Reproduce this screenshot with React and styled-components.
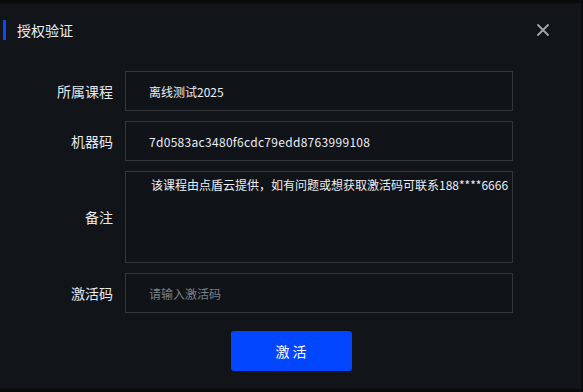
import React from "react";
import styled, { createGlobalStyle } from "styled-components";

const Global = createGlobalStyle`
  html, body { margin: 0; padding: 0; background: #0a0b0d; }
  body { font-family: "Noto Sans CJK SC", "Noto Sans", sans-serif; }
  * { box-sizing: border-box; }
`;

const Dialog = styled.div`
  margin-top: 3px;
  width: 581px;
  height: 386px;
  background: #111418;
  display: flex;
  flex-direction: column;
`;

const Header = styled.div`
  height: 54px;
  display: flex;
  align-items: center;
  padding: 0 26px 0 3px;
`;

const Accent = styled.span`
  width: 3px;
  height: 20px;
  background: #0b47ff;
  margin-right: 11px;
`;

const Title = styled.h2`
  margin: 0;
  flex: 1;
  font-size: 14px;
  font-weight: 400;
  color: #eef1f5;
  line-height: 20px;
`;

const Close = styled.button`
  width: 24px;
  height: 24px;
  padding: 0;
  border: none;
  background: none;
  display: flex;
  align-items: center;
  justify-content: center;
  cursor: pointer;
`;

const Form = styled.div`
  padding-top: 14px;
  display: grid;
  grid-template-columns: 113px 388px;
  column-gap: 12px;
  row-gap: 10px;
`;

const Label = styled.label`
  font-size: 14px;
  color: #e6e9ee;
  text-align: right;
  align-self: center;
`;

const Field = styled.input`
  height: 40px;
  width: 100%;
  background: #101317;
  border: 1px solid #34383d;
  border-radius: 0;
  padding: 0 23px;
  font-family: inherit;
  font-size: 12px;
  letter-spacing: ${(p) => (p.$mono ? "0.3px" : "0")};
  color: #eceff3;
  outline: none;
  &::placeholder { color: #7c8086; }
`;

const Area = styled.textarea`
  height: 92px;
  width: 100%;
  resize: none;
  overflow: hidden;
  white-space: pre;
  background: #101317;
  border: 1px solid #34383d;
  border-radius: 0;
  padding: 3px 0 0 25px;
  font-family: inherit;
  font-size: 12px;
  line-height: 20px;
  color: #eceff3;
  outline: none;
`;

const Footer = styled.div`
  display: flex;
  justify-content: center;
  padding-top: 18px;
`;

const Primary = styled.button`
  width: 121px;
  height: 40px;
  margin-left: 1px;
  border: none;
  border-radius: 3px;
  background: #0346ff;
  color: #ffffff;
  font-family: inherit;
  font-size: 14px;
  cursor: pointer;
`;

export default function App() {
  return (
    <>
      <Global />
      <Dialog>
        <Header>
          <Accent />
          <Title>授权验证</Title>
          <Close aria-label="close">
            <svg width="12" height="12" viewBox="0 0 12 12">
              <path d="M1 1 L11 11 M11 1 L1 11" stroke="#a3a7ad" strokeWidth="1.8" strokeLinecap="round" />
            </svg>
          </Close>
        </Header>
        <Form>
          <Label>所属课程</Label>
          <Field readOnly value="离线测试2025" />
          <Label>机器码</Label>
          <Field $mono readOnly value="7d0583ac3480f6cdc79edd8763999108" />
          <Label>备注</Label>
          <Area readOnly wrap="off" value="该课程由点盾云提供，如有问题或想获取激活码可联系188****6666" />
          <Label>激活码</Label>
          <Field placeholder="请输入激活码" />
        </Form>
        <Footer>
          <Primary>激 活</Primary>
        </Footer>
      </Dialog>
    </>
  );
}
